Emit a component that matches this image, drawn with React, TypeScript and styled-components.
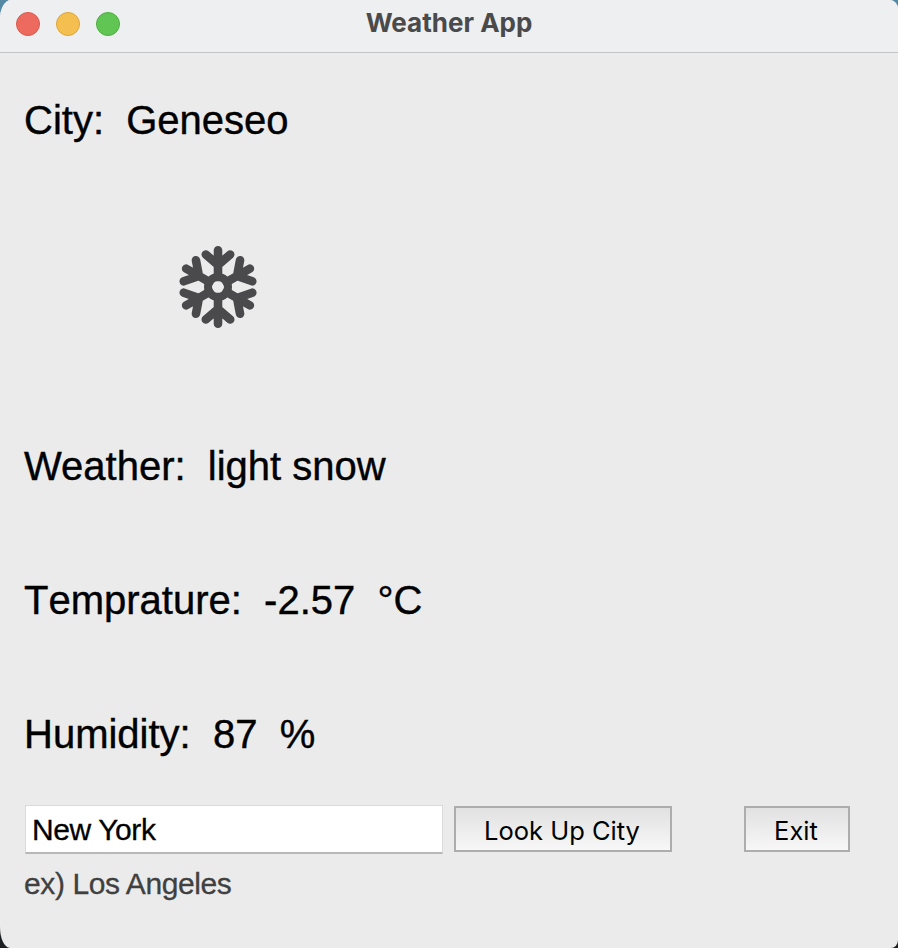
import React, { useState } from "react";
import styled, { createGlobalStyle } from "styled-components";

const GlobalStyle = createGlobalStyle`
  * { box-sizing: border-box; }
  html, body { margin: 0; padding: 0; }
  body {
    background: linear-gradient(#5488a3 0, #5488a3 50%, #1c1e22 50%);
    font-family: "Liberation Sans", Arial, sans-serif;
    overflow: hidden;
  }
`;

const Window = styled.main`
  width: 898px;
  height: 948px;
  display: flex;
  flex-direction: column;
  background: #ebebeb;
  border-radius: 11px 8px 7px 10px / 19px 9px 8px 21px;
  overflow: hidden;
`;

const TitleBar = styled.header`
  height: 53px;
  flex: none;
  display: grid;
  grid-template-columns: 1fr auto 1fr;
  align-items: center;
  padding: 0 16px 5px;
  background: #eeeff1;
  border-bottom: 1px solid #c3c4c5;
`;

const Lights = styled.div`
  display: flex;
  gap: 16px;
`;

const Light = styled.span<{ $fill: string; $edge: string }>`
  width: 24px;
  height: 24px;
  border-radius: 50%;
  background: ${(p) => p.$fill};
  border: 1px solid ${(p) => p.$edge};
`;

const Title = styled.h1`
  margin: 0 0 2px;
  font: 700 26px/30px Inter, sans-serif;
  color: #4a4a4a;
`;

const Content = styled.section`
  flex: 1;
  display: flex;
  flex-direction: column;
  align-items: flex-start;
  padding: 43px 48px 0 24px;
`;

const Reading = styled.p<{ $after: number; $kerning?: string }>`
  margin: 0 0 ${(p) => p.$after}px;
  height: 48px;
  font-size: 40px;
  line-height: 48px;
  font-kerning: ${(p) => p.$kerning ?? "normal"};
  -webkit-text-stroke: 0.4px #000;
  white-space: pre;
  color: #000;
`;

const Conditions = styled.div`
  width: 388px;
  height: 200px;
  margin: 1px 0 55px;
  display: grid;
  place-items: center;
`;

const Lookup = styled.form`
  width: 100%;
  display: flex;
  align-items: flex-start;
`;

const CityInput = styled.input`
  flex: none;
  width: 418px;
  height: 49px;
  margin: 0 11px 0 1px;
  padding: 2px 7px 0 6px;
  border: 1px solid #dadada;
  border-bottom: 2px solid #b8b8b8;
  border-radius: 0;
  outline: none;
  background: #fff;
  color: #000;
  font: 30px "Liberation Sans", Arial, sans-serif;
  letter-spacing: -0.4px;
  -webkit-text-stroke: 0.3px #000;
`;

const Button = styled.button<{ $width: number; $gap?: number }>`
  flex: none;
  width: ${(p) => p.$width}px;
  height: 46px;
  margin: 1px 0 0 ${(p) => p.$gap ?? 0}px;
  padding: 4px 2px 0 0;
  border: 2px solid #adadad;
  border-radius: 0;
  background: linear-gradient(#e1e1e1, #f7f7f7);
  color: #000;
  font: 400 25.5px/30px Inter, sans-serif;
  white-space: nowrap;
`;

const Hint = styled.p`
  margin: 12px 0 0;
  font-size: 30px;
  line-height: 36px;
  letter-spacing: -0.4px;
  -webkit-text-stroke: 0.3px #404040;
  color: #404040;
`;

const Snowflake = () => (
  <svg width="84" height="84" viewBox="-42 -42 84 84" fill="none" stroke="#4a4a4c" strokeLinecap="round" strokeLinejoin="round" aria-label="snow">
    <circle r="10" strokeWidth="8" />
    {[0, 60, 120, 180, 240, 300].map((angle) => (
      <path key={angle} d="M0-10V-36.8M-12.2-32.5 0-22 12.2-32.5" strokeWidth="8.6" transform={`rotate(${angle})`} />
    ))}
  </svg>
);

export default function App() {
  const [city, setCity] = useState("New York");
  return (
    <>
      <GlobalStyle />
      <Window>
        <TitleBar>
          <Lights>
            <Light $fill="#ec6a5e" $edge="#d8594e" />
            <Light $fill="#f4bf4f" $edge="#dba53c" />
            <Light $fill="#61c554" $edge="#4fae3f" />
          </Lights>
          <Title>Weather App</Title>
        </TitleBar>
        <Content>
          <Reading $after={42}>{"City:  Geneseo"}</Reading>
          <Conditions>
            <Snowflake />
          </Conditions>
          <Reading $after={86}>{"Weather:  light snow"}</Reading>
          <Reading $after={86} $kerning="none">{"Temprature:  -2.57  °C"}</Reading>
          <Reading $after={47}>{"Humidity:  87  %"}</Reading>
          <Lookup onSubmit={(e) => e.preventDefault()}>
            <CityInput value={city} onChange={(e) => setCity(e.target.value)} />
            <Button $width={218}>Look Up City</Button>
            <Button $width={106} $gap={72} type="button">Exit</Button>
          </Lookup>
          <Hint>ex) Los Angeles</Hint>
        </Content>
      </Window>
    </>
  );
}
